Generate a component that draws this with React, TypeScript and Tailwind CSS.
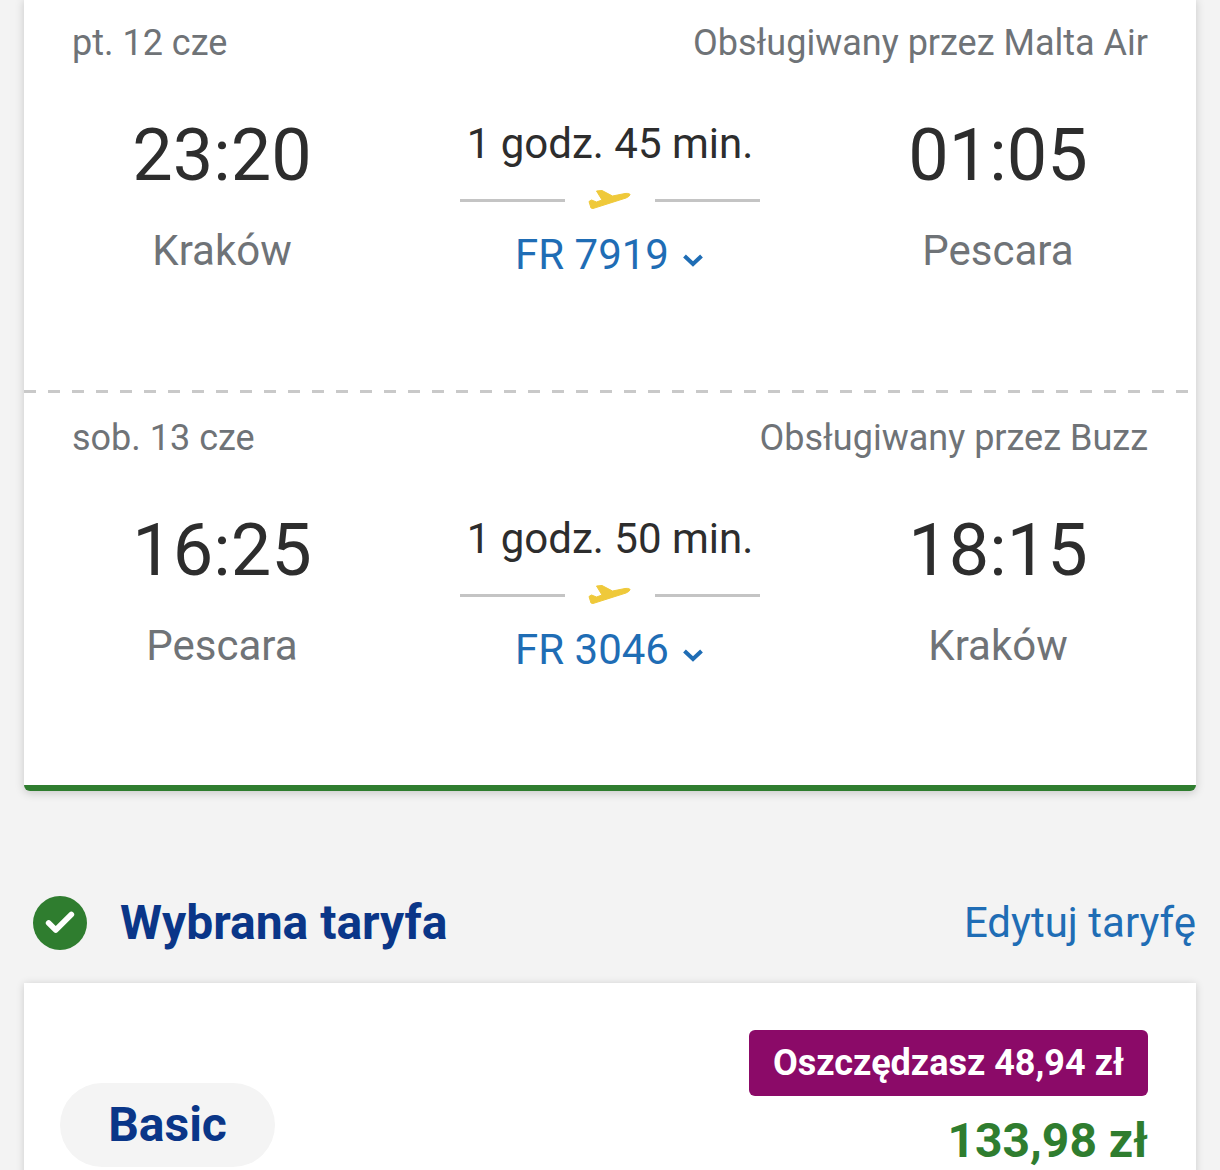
import React from 'react';
import { Check } from 'lucide-react';

interface Flight {
  date: string;
  operator: string;
  depart: string;
  from: string;
  duration: string;
  arrive: string;
  to: string;
  number: string;
}

const flights: Flight[] = [
  { date: 'pt. 12 cze', operator: 'Obsługiwany przez Malta Air', depart: '23:20', from: 'Kraków', duration: '1 godz. 45 min.', arrive: '01:05', to: 'Pescara', number: 'FR 7919' },
  { date: 'sob. 13 cze', operator: 'Obsługiwany przez Buzz', depart: '16:25', from: 'Pescara', duration: '1 godz. 50 min.', arrive: '18:15', to: 'Kraków', number: 'FR 3046' },
];

const PlaneIcon = () => (
  <svg viewBox="589 188 44 24" className="w-[44px] h-[24px] text-[#efc93a]" fill="currentColor" stroke="currentColor" strokeWidth={1} strokeLinejoin="round">
    <path d="M597.5 191 L603 190.5 L613.5 196 L626 193.5 Q631 193 631 194.8 Q630.5 196.5 627 198 L594 208.5 L592 208 L590 201.5 L592.5 200 L597.5 202 L603 200 Z" />
  </svg>
);

const Chevron = () => (
  <svg viewBox="0 0 20 13" className="w-[20px] h-[13px] mt-[10px] mr-[2px]" fill="none" stroke="currentColor" strokeWidth={4}>
    <polyline points="1.5,2 10,10 18.5,2" />
  </svg>
);

const FlightRow = ({ flight, first }: { flight: Flight; first: boolean }) => (
  <div className={first ? 'relative h-[395px] px-12 pt-[21px]' : 'relative h-[392px] px-12 pt-[21px]'}>
    <div className="flex justify-between text-[36px] leading-[48px] text-[#6f7377]">
      <span>{flight.date}</span>
      <span>{flight.operator}</span>
    </div>
    <div className="grid grid-cols-[300px_1fr_300px] mt-[49px]">
      <div className="text-center">
        <div className="text-[72px] leading-[80px] text-[#2d2d2d]">{flight.depart}</div>
        <div className="mt-[31px] text-[42px] leading-[48px] text-[#6f7377]">{flight.from}</div>
      </div>
      <div className="flex flex-col items-center">
        <div className="mt-[2px] text-[42px] leading-[52px] text-[#2d2d2d]">{flight.duration}</div>
        <div className="flex items-center justify-between w-[300px] h-[50px] mt-[5px]">
          <div className="w-[105px] h-[3px] bg-[#c4c4c4]" />
          <PlaneIcon />
          <div className="w-[105px] h-[3px] bg-[#c4c4c4]" />
        </div>
        <div className="flex items-center gap-[14px] mt-[4px] text-[#1f6db5]">
          <span className="text-[42px] leading-[52px]">{flight.number}</span>
          <Chevron />
        </div>
      </div>
      <div className="text-center">
        <div className="text-[72px] leading-[80px] text-[#2d2d2d]">{flight.arrive}</div>
        <div className="mt-[31px] text-[42px] leading-[48px] text-[#6f7377]">{flight.to}</div>
      </div>
    </div>
    {first && (
      <div className="absolute left-0 right-0 bottom-0 h-[3px] bg-[repeating-linear-gradient(90deg,#c9c9c9_0,#c9c9c9_12px,transparent_12px,transparent_24px)]" />
    )}
  </div>
);

export default function App() {
  return (
    <div className="h-[1170px] overflow-hidden bg-[#f3f3f3] px-6 font-['Roboto',sans-serif]">
      <div className="-mt-[2px] bg-white rounded-b-md border-b-[6px] border-[#2f7d2f] shadow-[0_2px_10px_rgba(0,0,0,0.18)]">
        {flights.map((flight, index) => (
          <FlightRow key={flight.number} flight={flight} first={index === 0} />
        ))}
      </div>

      <div className="flex items-center justify-between h-[64px] mt-[100px]">
        <div className="flex items-center">
          <div className="flex items-center justify-center w-[54px] h-[54px] ml-[9px] rounded-full bg-[#2f7d2f]">
            <Check className="w-[34px] h-[34px] text-white" strokeWidth={4} />
          </div>
          <h2 className="ml-[33px] text-[48px] leading-[64px] font-bold text-[#0a3688]">Wybrana taryfa</h2>
        </div>
        <a className="text-[42px] leading-[64px] text-[#1f6db5]">Edytuj taryfę</a>
      </div>

      <div className="flex justify-between h-[300px] mt-[28px] pl-9 pr-12 bg-white shadow-[0_1px_8px_rgba(0,0,0,0.16)]">
        <div className="flex items-center justify-center self-start w-[215px] h-[84px] mt-[100px] rounded-[42px] bg-[#f4f4f4] text-[48px] font-bold text-[#0a3688]">
          Basic
        </div>
        <div className="flex flex-col items-end pt-[47px]">
          <div className="flex items-center justify-center w-[399px] h-[66px] rounded-md bg-[#8b0a68] text-[36px] font-bold text-white">
            Oszczędzasz 48,94 zł
          </div>
          <div className="mt-[15px] text-[48px] leading-[60px] font-bold text-[#2f7d2f]">133,98 zł</div>
        </div>
      </div>
    </div>
  );
}
